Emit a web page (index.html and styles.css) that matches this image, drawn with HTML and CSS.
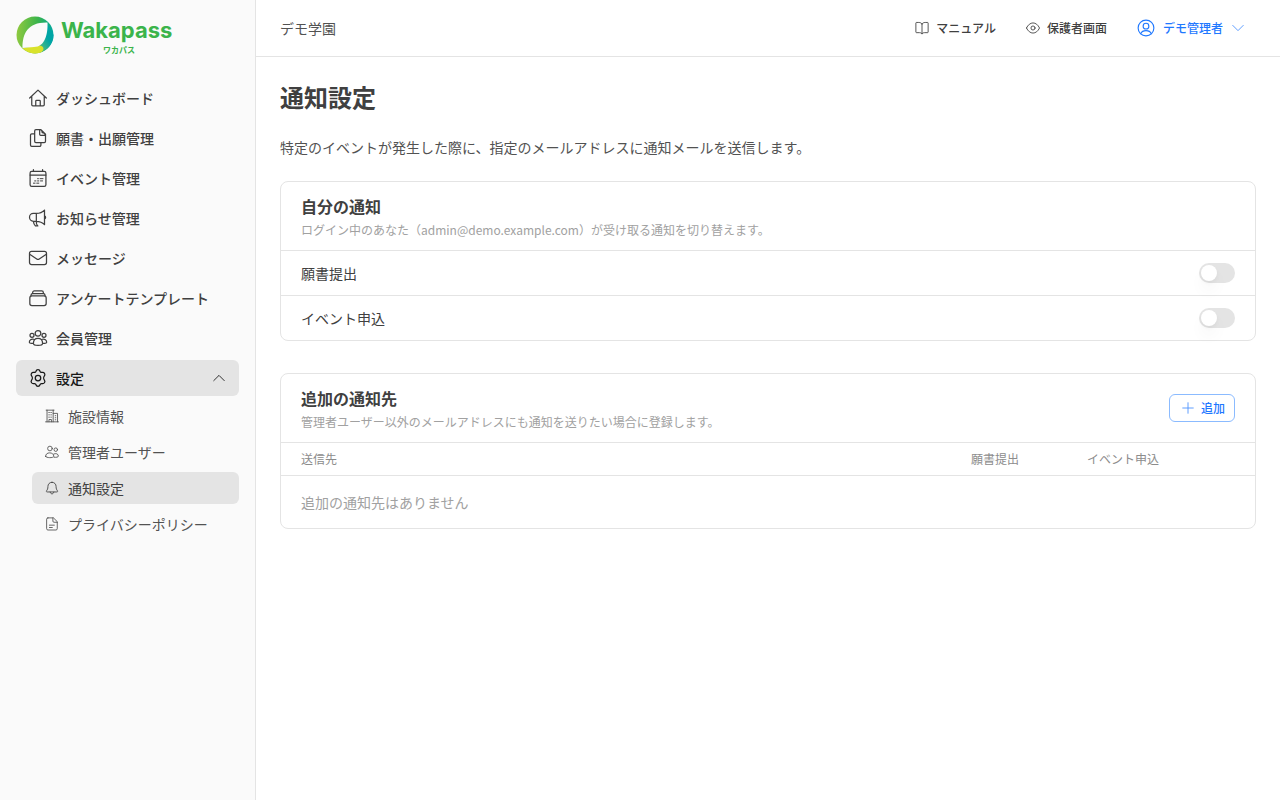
FILE: index.html
```html
<!DOCTYPE html>
<html lang="ja">
<head>
<meta charset="utf-8">
<meta name="viewport" content="width=device-width, initial-scale=1">
<title>通知設定 | Wakapass</title>
<link rel="stylesheet" href="styles.css">
</head>
<body>
<div class="app">
  <aside class="sidebar">
    <a class="logo" href="#">
      <svg class="logo-mark" viewBox="0 0 38 38" aria-hidden="true">
        <defs>
          <linearGradient id="ring" x1="0" y1="0.5" x2="1" y2="0.55">
            <stop offset="0" stop-color="#8fc93f"/>
            <stop offset="0.55" stop-color="#3bb44b"/>
            <stop offset="0.82" stop-color="#15ab7c"/>
            <stop offset="1" stop-color="#00a8a8"/>
          </linearGradient>
          <linearGradient id="tail" x1="0" y1="1" x2="1" y2="0">
            <stop offset="0" stop-color="#8fcc60"/>
            <stop offset="0.6" stop-color="#00a5a5"/>
          </linearGradient>
        </defs>
        <circle cx="19" cy="19" r="18.5" fill="url(#ring)"/>
        <path d="M31 7C31 22 26 31 17 32L22 37C31 35 37.500 28 37.500 19Z" fill="url(#tail)"/>
        <path d="M6.500 32C12 32 18 29.500 23 29.500C28.500 29.500 29 35 24 36.800C17 39 10 36 6.500 32Z" fill="#d9e22b"/>
        <path d="M31.500 6.500C32 18 29 31 18 31C14 31.500 10 31.500 6.500 32C6.500 17 12 6 31.500 6.500Z" fill="#fafafa"/>
      </svg>
      <span class="logo-text"><span class="logo-name">Wakapass</span><span class="logo-kana">ワカパス</span></span>
    </a>
    <nav class="nav">
      <a class="nav-item" href="#"><svg class="icon" viewBox="0 0 24 24"><path d="M2 12 12 2.500 22 12M4.500 9.800V20a1.300 1.300 0 0 0 1.300 1.300h12.400a1.300 1.300 0 0 0 1.300-1.300V9.800M9.300 21.300v-5.500a1 1 0 0 1 1-1h3.400a1 1 0 0 1 1 1v5.500"/></svg>ダッシュボード</a>
      <a class="nav-item" href="#"><svg class="icon" viewBox="0 0 24 24"><path d="M9.500 2H15.500L21 7.500V16a1.500 1.500 0 0 1-1.500 1.500H9.500A1.500 1.500 0 0 1 8 16V3.500A1.500 1.500 0 0 1 9.500 2ZM14 2v5.500a1.200 1.200 0 0 0 1.200 1.200H21M15 2q2 .5 2 3.500 3 0 4 3M8 7H4.500A1.500 1.500 0 0 0 3 8.500v12A1.500 1.500 0 0 0 4.500 22H14a1.500 1.500 0 0 0 1.500-1.500v-3"/></svg>願書・出願管理</a>
      <a class="nav-item" href="#"><svg class="icon" viewBox="0 0 24 24"><rect x="2.500" y="4" width="19" height="18" rx="2"/><path d="M2.500 8.500h19M6.500 4V2M17.500 4V2"/><path stroke-width="1.200" d="M11.500 12.800h1M14.500 12.800h3.500M8 15.500h1.500M11.500 15.500h1.500M15 15.500h2.500M6.500 18.200h2M10.500 18.200h2.500"/></svg>イベント管理</a>
      <a class="nav-item" href="#"><svg class="icon" viewBox="0 0 24 24"><path d="M10 6.500H6.500a4.700 4.700 0 0 0 0 9.400H10M10 6.500v9.400M10 6.500c4.500 0 7.500-1.500 9.800-4v17.500c-2.300-2.500-5.300-4.100-9.800-4.100M6.500 16c.2 2.500 1 4.200 2.500 5.500h2.800C10.300 20 9.700 18 10 16M19.800 9.500c1.800.8 1.800 3 0 3.700"/></svg>お知らせ管理</a>
      <a class="nav-item" href="#"><svg class="icon" viewBox="0 0 24 24"><rect x="1.800" y="4" width="20.400" height="16" rx="2.500"/><path d="m2 7.500 8.500 5.700a2.700 2.700 0 0 0 3 0L22 7.500"/></svg>メッセージ</a>
      <a class="nav-item" href="#"><svg class="icon" viewBox="0 0 24 24"><rect x="2.200" y="9.500" width="19.600" height="11.500" rx="2.500"/><path d="M3.600 9.500V8.600A2 2 0 0 1 5.600 6.600h12.800a2 2 0 0 1 2 2v.9M5.600 6.500V5.400a2 2 0 0 1 2-2h8.800a2 2 0 0 1 2 2v1.100"/></svg>アンケートテンプレート</a>
      <a class="nav-item" href="#"><svg class="icon" viewBox="0 0 24 24"><circle cx="12" cy="6.400" r="3.400"/><circle cx="4.800" cy="8.800" r="2.400"/><circle cx="19.200" cy="8.800" r="2.400"/><path d="M6.500 18.500c0-3.500 2.200-6 5.500-6s5.500 2.500 5.500 6c0 3-11 3-11 0ZM6.800 13.500C4 12.800 1.600 14.600 1.600 17c0 1.200 2.300 1.700 4.900 1.500M17.200 13.500c2.800-.7 5.200 1.100 5.200 3.500 0 1.200-2.300 1.700-4.900 1.500"/></svg>会員管理</a>
      <button class="nav-item nav-toggle" type="button" aria-expanded="true"><svg class="icon" viewBox="0 0 24 24"><path d="M9.600 3.900c.3-1.200 1-1.900 2.400-1.900s2.100.7 2.400 1.900c.3 1 1.300 1.600 2.400 1.400 1.400-.3 2.400.1 3.100 1.300.7 1.200.5 2.200-.4 3.200-.9 1-.9 3.400 0 4.400.9 1 1.100 2 .4 3.200-.7 1.200-1.700 1.600-3.100 1.300-1.100-.2-2.100.4-2.400 1.400-.3 1.200-1 1.900-2.400 1.900s-2.100-.7-2.400-1.900c-.3-1-1.300-1.600-2.400-1.400-1.400.3-2.400-.1-3.100-1.300-.7-1.200-.5-2.200.4-3.200.9-1 .9-3.400 0-4.400-.9-1-1.100-2-.4-3.200.7-1.200 1.700-1.600 3.100-1.300 1.100.2 2.100-.4 2.400-1.400Z"/><circle cx="12" cy="12" r="3.300"/></svg>設定<svg class="icon icon-small chevron" viewBox="0 0 24 24"><path d="m3 16.500 9-9 9 9"/></svg></button>
      <div class="subnav">
        <a class="sub-item" href="#"><svg class="icon icon-small" viewBox="0 0 24 24"><path d="M1 22h22M3.500 22V2M14 22V2M2 2h13.500M14 7.500h7.500V22M11 22v-4H6.800v4M6.500 6h1M10 6h1M6.500 10h1M10 10h1M6.500 14h1M10 14h1M17.500 11.500h1M17.500 15h1M17.500 18.500h1"/></svg>施設情報</a>
        <a class="sub-item" href="#"><svg class="icon icon-small" viewBox="0 0 24 24"><circle cx="8.500" cy="6" r="4"/><circle cx="18.500" cy="8" r="3"/><path d="M1 19.500C1 15.500 4 13.500 8 13.500s7 2 7 6c0 3-14 3-14 0ZM14.800 15.500c3.800-2 8.200-.2 8.200 3.500 0 1.700-3.500 2.500-7.500 2"/></svg>管理者ユーザー</a>
        <a class="sub-item current" href="#" aria-current="page"><svg class="icon icon-small" viewBox="0 0 24 24"><path d="M12 2.200c-4.500 0-7 3.300-7 7.300 0 4-1 5.500-2.300 7.200-.8 1.100-.2 2.100 1 2.100h16.600c1.200 0 1.800-1 1-2.100C20 15 19 13.500 19 9.500c0-4-2.500-7.300-7-7.300ZM9 19c.4 2 1.500 3 3 3s2.600-1 3-3"/></svg>通知設定</a>
        <a class="sub-item" href="#"><svg class="icon icon-small" viewBox="0 0 24 24"><path d="M5 1.500h9.500L21 8v12a2.300 2.300 0 0 1-2.300 2.300H5A2.300 2.300 0 0 1 2.800 20V3.700A2.200 2.200 0 0 1 5 1.500ZM13.500 1.500V7a2 2 0 0 0 2 2H21M7.500 14h8.500M7.500 18h5"/></svg>プライバシーポリシー</a>
      </div>
    </nav>
  </aside>

  <div class="content">
    <header class="topbar">
      <span class="school">デモ学園</span>
      <div class="top-links">
        <a class="top-link" href="#"><svg class="icon icon-small" viewBox="0 0 24 24"><path d="M12 5C11 3.500 9 2.500 6.500 2.500H2.500a1 1 0 0 0-1 1V19a1 1 0 0 0 1 1h5c2.200 0 4 .7 4.500 2.300.5-1.600 2.300-2.300 4.500-2.300h5a1 1 0 0 0 1-1V3.500a1 1 0 0 0-1-1h-4C15 2.500 13 3.500 12 5ZM12 5v17"/></svg>マニュアル</a>
        <a class="top-link" href="#"><svg class="icon icon-small" viewBox="0 0 24 24"><path d="M.8 12C3.500 6.500 7.500 3.300 12 3.300S20.500 6.500 23.200 12c-2.700 5.500-6.700 8.700-11.200 8.700S3.500 17.500.8 12Z"/><circle cx="12" cy="12" r="3.500"/></svg>保護者画面</a>
        <button class="top-link account" type="button"><svg class="icon icon-account" viewBox="0 0 24 24"><circle cx="12" cy="12" r="10.500"/><circle cx="12" cy="9.500" r="3.800"/><path d="M5 19.500c1-2.500 3.500-4 7-4s6 1.500 7 4"/></svg>デモ管理者<svg class="icon icon-small account-chevron" viewBox="0 0 24 24"><path d="m3 7.500 9 9 9-9"/></svg></button>
      </div>
    </header>

    <main class="main">
      <h1 class="page-title">通知設定</h1>
      <p class="lead">特定のイベントが発生した際に、指定のメールアドレスに通知メールを送信します。</p>

      <section class="card">
        <div class="card-head">
          <div>
            <h2 class="card-title">自分の通知</h2>
            <p class="card-note">ログイン中のあなた（admin@demo.example.com）が受け取る通知を切り替えます。</p>
          </div>
        </div>
        <div class="setting"><label for="notify-application">願書提出</label><input class="switch" id="notify-application" type="checkbox" role="switch"></div>
        <div class="setting"><label for="notify-event">イベント申込</label><input class="switch" id="notify-event" type="checkbox" role="switch"></div>
      </section>

      <section class="card">
        <div class="card-head">
          <div>
            <h2 class="card-title">追加の通知先</h2>
            <p class="card-note">管理者ユーザー以外のメールアドレスにも通知を送りたい場合に登録します。</p>
          </div>
          <button class="add-button" type="button"><svg class="icon icon-small" viewBox="0 0 24 24"><path d="M12 3v18M3 12h18"/></svg>追加</button>
        </div>
        <table class="recipients">
          <colgroup><col><col class="col-flag"><col class="col-flag"><col class="col-actions"></colgroup>
          <thead><tr><th class="address" scope="col">送信先</th><th scope="col">願書提出</th><th scope="col">イベント申込</th><td></td></tr></thead>
          <tbody><tr><td class="empty" colspan="4">追加の通知先はありません</td></tr></tbody>
        </table>
      </section>
    </main>
  </div>
</div>
</body>
</html>
```
FILE: styles.css
```css
* {
  box-sizing: border-box;
}

body {
  margin: 0;
  background: #fff;
  color: #404040;
  font-family: "Noto Sans CJK JP", "Noto Sans", sans-serif;
  font-size: 14px;
  line-height: 20px;
}

h1, h2, p {
  margin: 0;
}

a {
  color: inherit;
  text-decoration: none;
}

button {
  margin: 0;
  border: 0;
  background: none;
  color: inherit;
  font: inherit;
  cursor: pointer;
}

.app {
  display: flex;
  min-height: 100vh;
}

.sidebar {
  flex: 0 0 256px;
  padding: 16px;
  border-right: 1px solid #e4e4e4;
  background: #fafafa;
}

.content {
  flex: 1;
  min-width: 0;
}

.icon {
  flex: none;
  width: 20px;
  height: 20px;
  fill: none;
  stroke: currentColor;
  stroke-width: 1.5;
  stroke-linecap: round;
  stroke-linejoin: round;
}

.icon-small {
  width: 14px;
  height: 14px;
}

.icon-account {
  width: 18px;
  height: 18px;
}

.logo {
  display: flex;
  gap: 7px;
  height: 40px;
  margin-bottom: 24px;
}

.logo-mark {
  width: 38px;
  height: 38px;
}

.logo-text {
  display: flex;
  flex-direction: column;
  width: 116px;
  color: #3bb44b;
  font-weight: 700;
}

.logo-name {
  font-family: Inter, sans-serif;
  font-size: 22px;
  line-height: 28px;
}

.logo-kana {
  font-size: 8px;
  line-height: 12px;
  text-align: center;
}

.nav {
  display: flex;
  flex-direction: column;
  gap: 4px;
}

.nav-item {
  display: flex;
  align-items: center;
  gap: 8px;
  width: 100%;
  height: 36px;
  padding: 0 12px;
  border-radius: 6px;
  font-weight: 500;
}

.nav-toggle {
  background: #e4e4e4;
  color: #171717;
}

.chevron {
  margin-left: auto;
  margin-right: 1px;
}

.subnav {
  display: flex;
  flex-direction: column;
  gap: 4px;
  padding-left: 16px;
}

.sub-item {
  display: flex;
  align-items: center;
  gap: 9px;
  height: 32px;
  padding: 0 13px;
  border-radius: 6px;
  color: #525252;
}

.sub-item.current {
  background: #e4e4e4;
  color: #404040;
}

.topbar {
  display: flex;
  align-items: center;
  justify-content: space-between;
  height: 57px;
  padding: 0 24px;
  border-bottom: 1px solid #e4e4e4;
}

.school {
  color: #525252;
}

.top-links {
  display: flex;
  align-items: center;
  gap: 8px;
}

.top-link {
  display: flex;
  align-items: center;
  gap: 7px;
  padding: 4px 11px;
  font-size: 12px;
  font-weight: 500;
}

.account {
  gap: 8px;
  color: #1f78ff;
}

.account-chevron {
  opacity: 0.8;
}

.main {
  padding: 24px;
}

.page-title {
  margin-bottom: 24px;
  font-size: 24px;
  font-weight: 700;
  line-height: 32px;
}

.lead {
  margin-bottom: 24px;
  color: #525252;
}

.card {
  margin-bottom: 32px;
  border: 1px solid #e4e4e4;
  border-radius: 8px;
}

.card-head {
  display: flex;
  align-items: center;
  justify-content: space-between;
  padding: 12px 20px;
}

.card-title {
  font-size: 16px;
  font-weight: 700;
  line-height: 24px;
}

.card-note {
  margin-top: 4px;
  color: #a1a1a1;
  font-size: 12px;
  line-height: 16px;
}

.setting {
  display: flex;
  align-items: center;
  justify-content: space-between;
  height: 45px;
  padding: 0 20px;
  border-top: 1px solid #e4e4e4;
}

.switch {
  appearance: none;
  display: flex;
  align-items: center;
  width: 36px;
  height: 20px;
  margin: 0;
  padding: 2px;
  border-radius: 10px;
  background: #e4e4e4;
  cursor: pointer;
}

.switch::before {
  content: "";
  width: 16px;
  height: 16px;
  border-radius: 8px;
  background: #fff;
  box-shadow: 0 10px 15px rgba(0, 0, 0, 0.04), 0 2px 4px rgba(0, 0, 0, 0.04);
}

.switch:checked {
  justify-content: flex-end;
  background: #1f78ff;
}

.add-button {
  display: flex;
  align-items: center;
  gap: 6px;
  height: 28px;
  padding: 0 9px 0 11px;
  border: 1px solid #8bbbff;
  border-radius: 6px;
  color: #1f78ff;
  font-size: 12px;
  font-weight: 500;
}

.add-button .icon {
  opacity: 0.8;
}

.recipients {
  width: 100%;
  border-collapse: collapse;
  table-layout: fixed;
}

.recipients tr {
  border-top: 1px solid #e4e4e4;
}

.col-flag {
  width: 128px;
}

.col-actions {
  width: 68px;
}

.recipients th {
  padding: 8px 0;
  color: #8c8c8c;
  font-size: 12px;
  font-weight: 400;
  line-height: 16px;
  text-align: center;
}

.recipients th.address {
  padding-left: 20px;
  text-align: left;
}

.recipients .empty {
  padding: 16px 20px;
  color: #a1a1a1;
}
```
